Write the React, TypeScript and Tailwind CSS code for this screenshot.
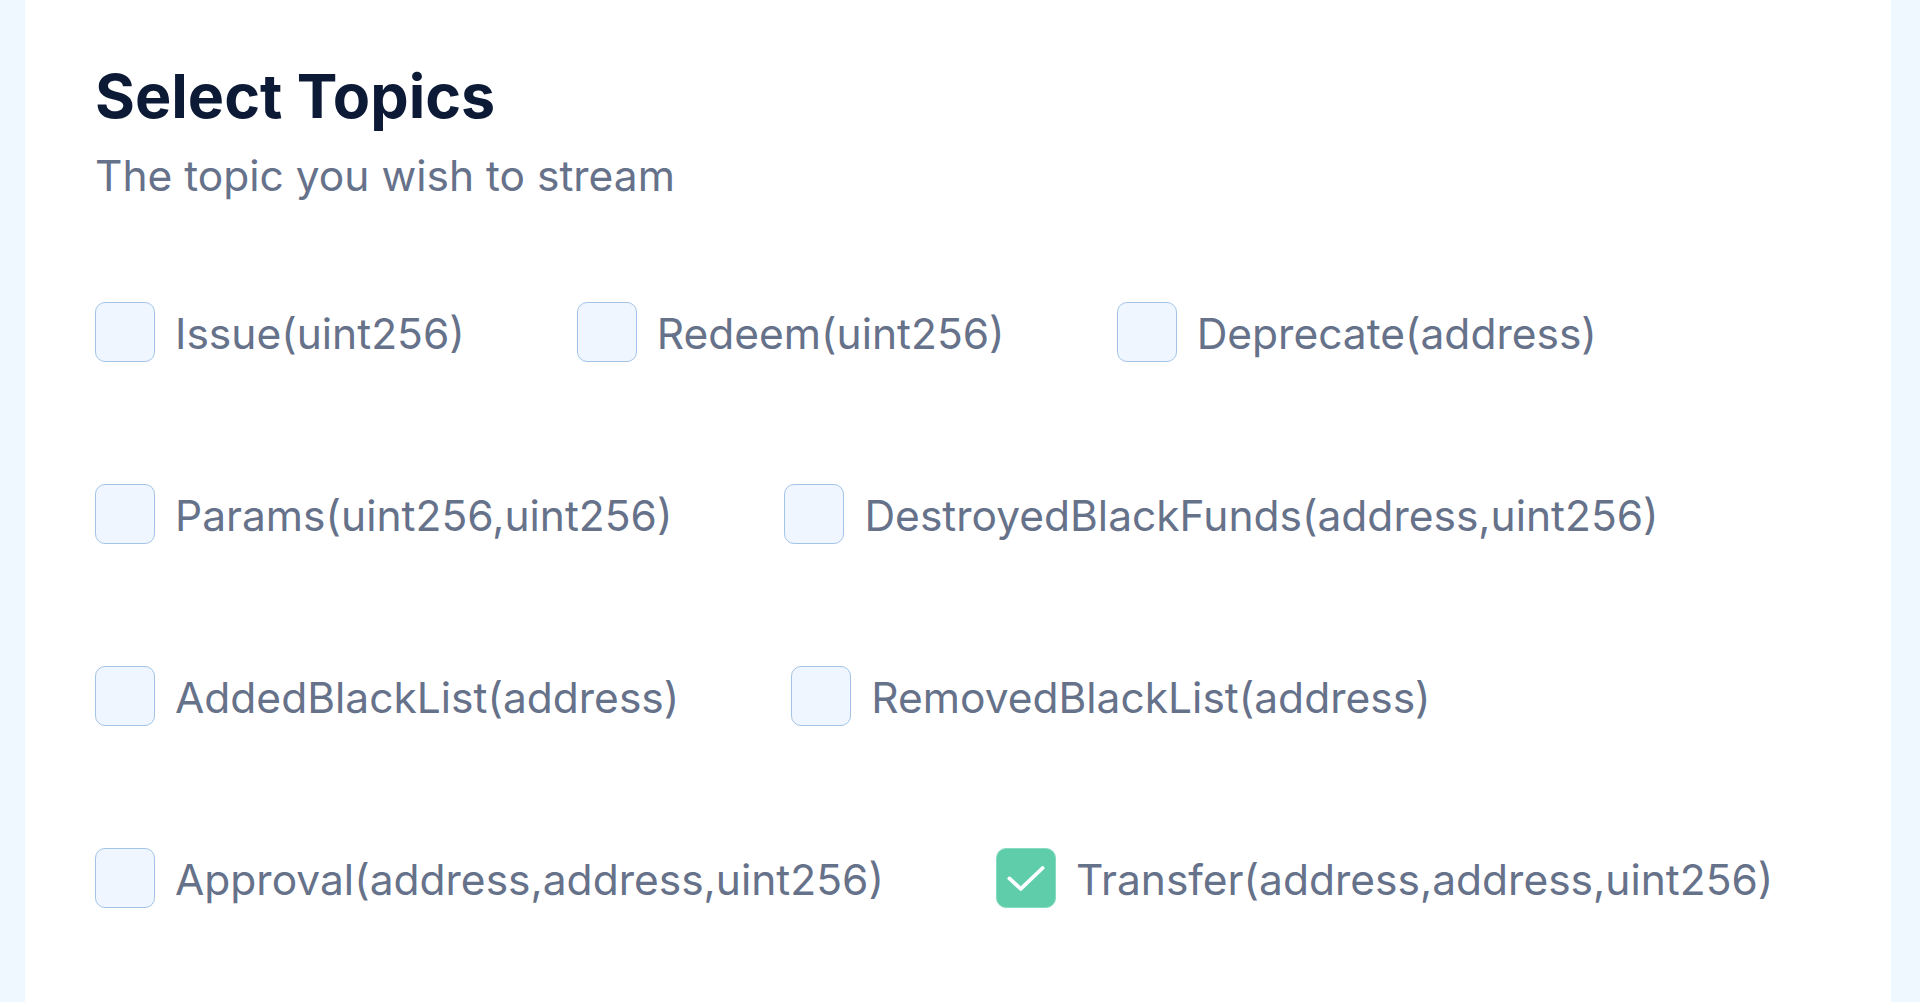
import React from "react";

const rows: { label: string; checked?: boolean }[][] = [
  [{ label: "Issue(uint256)" }, { label: "Redeem(uint256)" }, { label: "Deprecate(address)" }],
  [{ label: "Params(uint256,uint256)" }, { label: "DestroyedBlackFunds(address,uint256)" }],
  [{ label: "AddedBlackList(address)" }, { label: "RemovedBlackList(address)" }],
  [{ label: "Approval(address,address,uint256)" }, { label: "Transfer(address,address,uint256)", checked: true }],
];

function Box({ checked }: { checked?: boolean }) {
  if (checked) {
    return (
      <div className="w-[60px] h-[60px] shrink-0 rounded-[10px] bg-[#5fcdaa] border-[1.5px] border-[#86dcc0] overflow-hidden">
        <svg width="57" height="57" viewBox="0 0 60 60" fill="none" stroke="white" strokeWidth="4" strokeLinecap="round" strokeLinejoin="round">
          <path d="M13 31 L25 42 L48 20" />
        </svg>
      </div>
    );
  }
  return <div className="w-[60px] h-[60px] shrink-0 rounded-[10px] bg-[#eff6ff] border-[1.5px] border-[#a3c4e6]" />;
}

export default function App() {
  return (
    <div className="h-screen overflow-hidden bg-[#eff7ff] pl-[25px] pr-[29px]" style={{ fontFamily: "Inter, 'Noto Sans', sans-serif" }}>
      <div className="h-full bg-white pl-[70px] pt-[66px]">
        <h1 className="text-[61px] leading-none font-bold text-[#0c1a36]">Select Topics</h1>
        <p className="mt-[28px] text-[42.5px] leading-none text-[#66718a]">The topic you wish to stream</p>
        <div className="mt-[104px] flex flex-col gap-[122px]">
          {rows.map((row, i) => (
            <div key={i} className="flex items-center gap-[112px]">
              {row.map((it) => (
                <div key={it.label} className="flex items-center gap-[20px]">
                  <Box checked={it.checked} />
                  <span className="pt-[6px] text-[42.5px] leading-none text-[#66718a]">{it.label}</span>
                </div>
              ))}
            </div>
          ))}
        </div>
      </div>
    </div>
  );
}
